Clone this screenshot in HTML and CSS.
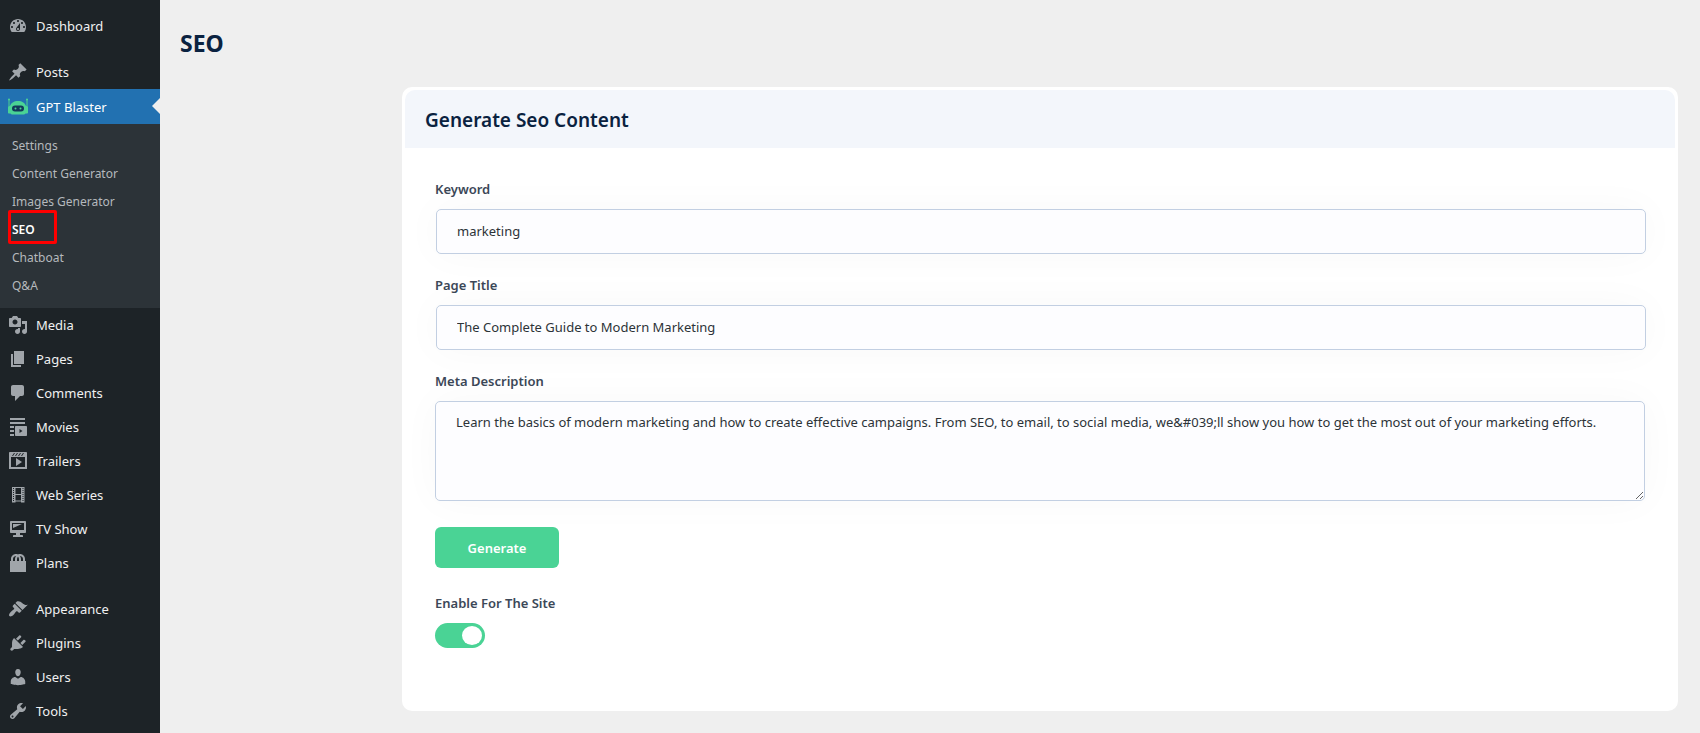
FILE: index.html
```html
<!DOCTYPE html>
<html lang="en">
<head>
<meta charset="utf-8">
<title>SEO</title>
<link rel="stylesheet" href="styles.css">
</head>
<body>
<div class="layout">
  <nav class="sidebar" aria-label="Main menu">
    <ul class="menu">
      <li><a class="menu-link" href="#"><svg class="icon" viewBox="0 0 20 20"><path fill-rule="evenodd" d="M3.76 16h12.48c1.1-1.37 1.76-3.11 1.76-5 0-4.42-3.58-8-8-8s-8 3.58-8 8c0 1.89.66 3.63 1.76 5zM10 4c.55 0 1 .45 1 1s-.45 1-1 1-1-.45-1-1 .45-1 1-1zM6 6c.55 0 1 .45 1 1s-.45 1-1 1-1-.45-1-1 .45-1 1-1zm8 0c.55 0 1 .45 1 1s-.45 1-1 1-1-.45-1-1 .45-1 1-1zm-5.37 5.55L12 7v6c0 1.1-.9 2-2 2s-2-.9-2-2c0-.57.24-1.08.63-1.45zM4 10c.55 0 1 .45 1 1s-.45 1-1 1-1-.45-1-1 .45-1 1-1zm12 0c.55 0 1 .45 1 1s-.45 1-1 1-1-.45-1-1 .45-1 1-1zm-5 3c0-.55-.45-1-1-1s-1 .45-1 1 .45 1 1 1 1-.45 1-1z"/></svg>Dashboard</a></li>
      <li class="group-start"><a class="menu-link" href="#"><svg class="icon" viewBox="0 0 20 20"><path d="M10.44 3.02l1.82-1.82 6.36 6.35-1.83 1.82c-1.05-.68-2.48-.57-3.41.36l-.75.75c-.92.93-1.04 2.35-.35 3.41l-1.83 1.82-2.41-2.41-2.8 2.79c-.42.42-3.38 2.71-3.8 2.29s1.86-3.39 2.28-3.81l2.79-2.79L4.1 9.36l1.83-1.82c1.05.69 2.48.57 3.4-.36l.75-.75c.93-.92 1.05-2.35.36-3.41z"/></svg>Posts</a></li>
      <li>
        <a class="menu-link active" href="#"><svg class="icon robot" viewBox="0 0 20 20"><path d="M1 2v14M19 2v14" fill="none" stroke="currentColor" stroke-width="1"/><circle cx="1" cy="2.500" r="1"/><circle cx="19" cy="2.500" r="1"/><path d="M0 10.500c0-1 1-1.500 2-1.500C3 6 6 4 10 4s7 2 8 5c1 0 2 .5 2 1.500v5c0 .6-.5 1-1 1h-1.500c-.5.800-1.200 1-2 1h-11c-.8 0-1.500-.2-2-1H1c-.5 0-1-.4-1-1z"/><rect class="visor" x="4" y="8.500" width="12" height="6" rx="3"/><circle cx="7.500" cy="11.500" r="1"/><circle cx="12.500" cy="11.500" r="1"/></svg>GPT Blaster</a>
        <ul class="submenu">
          <li><a href="#">Settings</a></li>
          <li><a href="#">Content Generator</a></li>
          <li><a href="#">Images Generator</a></li>
          <li class="highlighted"><a class="current" href="#">SEO</a></li>
          <li><a href="#">Chatboat</a></li>
          <li><a href="#">Q&amp;A</a></li>
        </ul>
      </li>
      <li><a class="menu-link" href="#"><svg class="icon" viewBox="0 0 20 20"><path fill-rule="evenodd" d="M13 11V4c0-.55-.45-1-1-1h-1.670L9 1H5L3.670 3H2c-.55 0-1 .45-1 1v7c0 .55.45 1 1 1h10c.55 0 1-.45 1-1zM7 4.500c1.380 0 2.500 1.120 2.500 2.500S8.380 9.500 7 9.500 4.500 8.380 4.500 7 5.620 4.500 7 4.500zM14 6h5v10.500c0 1.380-1.120 2.500-2.500 2.500S14 17.880 14 16.500s1.120-2.500 2.500-2.500c.17 0 .34.02.5.05V9h-3V6zm-4 8.050V13h2v3.500c0 1.380-1.120 2.500-2.500 2.500S7 17.880 7 16.500 8.120 14 9.500 14c.17 0 .34.02.5.05z"/></svg>Media</a></li>
      <li><a class="menu-link" href="#"><svg class="icon" viewBox="0 0 20 20"><path d="M6 15V2h10v13H6zm-1 1h8v2H3V5h2v11z"/></svg>Pages</a></li>
      <li><a class="menu-link" href="#"><svg class="icon" viewBox="0 0 20 20"><path d="M5 2h9c1.100 0 2 .9 2 2v7c0 1.100-.9 2-2 2h-2l-5 5v-5H5c-1.100 0-2-.9-2-2V4c0-1.100.9-2 2-2z"/></svg>Comments</a></li>
      <li><a class="menu-link" href="#"><svg class="icon" viewBox="0 0 20 20"><path fill-rule="evenodd" d="M17 3V1H2v2h15zm0 4V5H2v2h15zM6 11V9H2v2h4zm2-2h10c.55 0 1 .45 1 1v8c0 .55-.45 1-1 1H8c-.55 0-1-.45-1-1v-8c0-.55.45-1 1-1zm3.500 7l3-2-3-2v4zM6 15v-2H2v2h4zm0 4v-2H2v2h4z"/></svg>Movies</a></li>
      <li><a class="menu-link" href="#"><svg class="icon" viewBox="0 0 20 20"><path fill-rule="evenodd" d="M2 1h16c.55 0 1 .45 1 1v16H1V2c0-.55.45-1 1-1zm4 1L4 5h1l2-3H6zm3 0L7 5h1l2-3H9zm3 0l-2 3h1l2-3h-1zm3 0l-2 3h1l2-3h-1zm2 14V6H3v10h14zM8 7l6 4-6 4V7z"/></svg>Trailers</a></li>
      <li><a class="menu-link" href="#"><svg class="icon" viewBox="0 0 20 20"><path fill-rule="evenodd" d="M4 2h12.500v15.500H13v-1H7.500v1H4zM5 3v1h1V3zm0 2v1h1V5zm0 2v1h1V7zm0 2v1h1V9zm0 2v1h1v-1zm0 2v1h1v-1zm0 2v1h1v-1zM14.500 3v1h1V3zm0 2v1h1V5zm0 2v1h1V7zm0 2v1h1V9zm0 2v1h1v-1zm0 2v1h1v-1zm0 2v1h1v-1zM7.500 3v6H13V3zm0 7v5.500H13V10z"/></svg>Web Series</a></li>
      <li><a class="menu-link" href="#"><svg class="icon" viewBox="0 0 20 20"><path fill-rule="evenodd" d="M3 2h14c.55 0 1 .45 1 1v10c0 .55-.45 1-1 1h-5v2h2c.55 0 1 .45 1 1v1H5v-1c0-.55.45-1 1-1h2v-2H3c-.55 0-1-.45-1-1V3c0-.55.45-1 1-1zm13 9V4H4v7h12zM5 5h9L5 9V5z"/></svg>TV Show</a></li>
      <li><a class="menu-link" href="#"><svg class="icon" viewBox="0 0 20 20"><path fill-rule="evenodd" d="M17 8h1v11H2V8h1V6c0-2.760 2.240-5 5-5 .71 0 1.390.15 2 .42.61-.27 1.290-.42 2-.42 2.760 0 5 2.240 5 5v2zM5 6v2h2V6c0-1.130.39-2.160 1.020-3H8C6.350 3 5 4.350 5 6zm10 2V6c0-1.650-1.350-3-3-3h-.02c.63.84 1.020 1.870 1.020 3v2h2zm-5-4.220C9.390 4.330 9 5.120 9 6v2h2V6c0-.88-.39-1.670-1-2.220z"/></svg>Plans</a></li>
      <li class="group-start"><a class="menu-link" href="#"><svg class="icon" viewBox="0 0 20 20"><path d="M14.480 11.060L7.410 3.990l1.500-1.500c.5-.56 2.300-.47 3.510.32 1.210.8 1.430 1.280 2.910 2.100 1.180.64 2.450 1.260 4.450.85zm-.71.71L6.700 4.700 4.930 6.470c-.39.39-.39 1.020 0 1.410l1.060 1.060c.39.39.39 1.030 0 1.420-.6.6-1.430 1.110-2.210 1.690-.35.26-.7.53-1.010.84C1.430 14.230.4 16.080 1.400 17.070c.99 1 2.840-.03 4.180-1.360.31-.31.58-.66.85-1.020.57-.78 1.080-1.610 1.690-2.210.39-.39 1.020-.39 1.410 0l1.060 1.060c.39.39 1.020.39 1.410 0z"/></svg>Appearance</a></li>
      <li><a class="menu-link" href="#"><svg class="icon" viewBox="0 0 20 20"><path d="M13.110 4.360L9.870 7.600 8 5.730l3.240-3.240c.35-.34 1.050-.2 1.560.32.52.51.66 1.210.31 1.550zm-8 1.770l.91-1.120 9.010 9.010-1.190.84c-.71.71-2.630 1.160-3.820 1.160H6.140L4.900 17.260c-.59.59-1.540.59-2.120 0-.59-.58-.59-1.530 0-2.120l1.240-1.240v-3.880c0-1.130.4-3.190 1.090-3.890zm7.260 3.970l3.240-3.240c.34-.35 1.040-.21 1.550.31.52.51.66 1.210.31 1.550l-3.240 3.250z"/></svg>Plugins</a></li>
      <li><a class="menu-link" href="#"><svg class="icon" viewBox="0 0 20 20"><path d="M10 9.250c-2.270 0-2.730-3.440-2.730-3.440C7 4.020 7.820 2 9.970 2c2.160 0 2.980 2.020 2.710 3.810 0 0-.41 3.440-2.680 3.440zm0 2.570L12.720 10c2.390 0 4.520 2.330 4.520 4.530v2.490s-3.650 1.130-7.240 1.130c-3.650 0-7.240-1.130-7.240-1.130v-2.490c0-2.250 1.940-4.480 4.470-4.480z"/></svg>Users</a></li>
      <li><a class="menu-link" href="#"><svg class="icon" viewBox="0 0 20 20"><path fill-rule="evenodd" d="M16.680 9.770c-1.340 1.340-3.300 1.670-4.950.99l-5.410 6.520c-.99.99-2.590.99-3.580 0s-.99-2.590 0-3.570l6.520-5.420c-.68-1.650-.35-3.610.99-4.950 1.280-1.280 3.120-1.620 4.720-1.060l-2.890 2.890 2.820 2.820 2.860-2.870c.53 1.580.18 3.390-1.080 4.650zM3.810 16.210c.4.39 1.040.39 1.430 0 .4-.4.4-1.040 0-1.430-.39-.4-1.030-.4-1.430 0-.39.39-.39 1.030 0 1.430z"/></svg>Tools</a></li>
    </ul>
  </nav>
  <main class="content">
    <h1 class="page-title">SEO</h1>
    <section class="card">
      <header class="card-header"><h2 class="card-title">Generate Seo Content</h2></header>
      <form class="form">
        <div class="field">
          <label for="keyword">Keyword</label>
          <input class="control" id="keyword" type="text" value="marketing">
        </div>
        <div class="field">
          <label for="page-title">Page Title</label>
          <input class="control" id="page-title" type="text" value="The Complete Guide to Modern Marketing">
        </div>
        <div class="field">
          <label for="meta">Meta Description</label>
          <textarea class="control" id="meta">Learn the basics of modern marketing and how to create effective campaigns. From SEO, to email, to social media, we&amp;#039;ll show you how to get the most out of your marketing efforts.</textarea>
        </div>
        <button class="generate" type="button">Generate</button>
        <div class="field">
          <label for="enable">Enable For The Site</label>
          <input class="toggle" id="enable" type="checkbox" role="switch" checked>
        </div>
      </form>
    </section>
  </main>
</div>
</body>
</html>
```
FILE: styles.css
```css
*,
*::before,
*::after {
  box-sizing: border-box;
}

body {
  margin: 0;
  background: #efefef;
  font-family: "Segoe UI", "Noto Sans", "Open Sans", sans-serif;
  font-size: 13px;
  color: #2c3338;
}

.layout {
  display: flex;
  height: 100vh;
  overflow: hidden;
}

/* Sidebar */
.sidebar {
  flex: 0 0 160px;
  padding-top: 9px;
  background: #1d2327;
}

.menu,
.submenu {
  margin: 0;
  padding: 0;
  list-style: none;
}

.group-start {
  margin-top: 12px;
}

.menu-link {
  position: relative;
  display: flex;
  align-items: center;
  gap: 8px;
  height: 34px;
  padding-left: 8px;
  color: #f0f0f1;
  font-size: 13px;
  text-decoration: none;
}

.icon {
  flex: none;
  width: 20px;
  height: 20px;
  fill: #a0a5aa;
}

.active {
  height: 35px;
  background: #2271b1;
  color: #fff;
}

.active::after {
  content: "";
  position: absolute;
  top: 9px;
  right: 0;
  border: 8px solid transparent;
  border-left-width: 0;
  border-right-color: #efefef;
}

.robot {
  fill: #4ad395;
  color: #4ad395;
}

.visor {
  fill: #12395a;
}

.submenu {
  padding: 8px 0;
  background: #2c3338;
}

.submenu a {
  display: block;
  padding-left: 12px;
  color: #b5b9bd;
  font-size: 12px;
  line-height: 28px;
  text-decoration: none;
}

.submenu .current {
  color: #fff;
  font-weight: 600;
}

.highlighted {
  position: relative;
}

.highlighted::after {
  content: "";
  position: absolute;
  top: -6px;
  left: 8px;
  width: 49px;
  height: 34px;
  border: 3px solid #f00;
  border-radius: 2px;
}

/* Content */
.content {
  flex: 1;
  min-width: 0;
  padding: 27px 22px 0 20px;
}

.page-title {
  margin: 0 0 28px;
  color: #0a2240;
  font-size: 23px;
  line-height: 32px;
  font-weight: 700;
}

.card {
  margin-left: 222px;
  padding: 3px 3px 63px;
  background: #fff;
  border-radius: 10px;
}

.card-header {
  padding: 2px 20px 0;
  background: #f3f6fb;
  border-radius: 10px 10px 0 0;
}

.card-title {
  margin: 0;
  color: #0a2240;
  font-size: 19px;
  line-height: 56px;
  font-weight: 600;
}

.form {
  display: flex;
  flex-direction: column;
  gap: 22px;
  padding: 32px 30px 0;
}

.field {
  display: flex;
  flex-direction: column;
  gap: 11px;
}

.field label {
  color: #3c4858;
  font-size: 13px;
  line-height: 18px;
  font-weight: 600;
}

.control {
  padding: 0 20px;
  background: #fdfdff;
  border: 1px solid #c2cfe2;
  border-radius: 5px;
  box-shadow: 0 0 40px rgba(0, 0, 0, 0.03);
  color: #2c3338;
  font: inherit;
  outline: none;
}

input.control {
  height: 45px;
  margin: 0 -1px 0 1px;
  padding-bottom: 2px;
}

textarea.control {
  display: block;
  height: 100px;
  padding-top: 10px;
  line-height: 20px;
  resize: vertical;
}

.generate {
  align-self: flex-start;
  width: 124px;
  height: 41px;
  margin: 4px 0;
  border: 0;
  border-radius: 6px;
  background: #4ad395;
  color: #fff;
  font: inherit;
  font-weight: 600;
}

.toggle {
  appearance: none;
  display: flex;
  justify-content: flex-end;
  width: 50px;
  height: 25px;
  margin: 0;
  padding: 3px;
  border-radius: 13px;
  background: #4ad395;
}

.toggle::before {
  content: "";
  width: 20px;
  border-radius: 50%;
  background: #fff;
}

.toggle:not(:checked) {
  justify-content: flex-start;
  background: #c2cfe2;
}
```
